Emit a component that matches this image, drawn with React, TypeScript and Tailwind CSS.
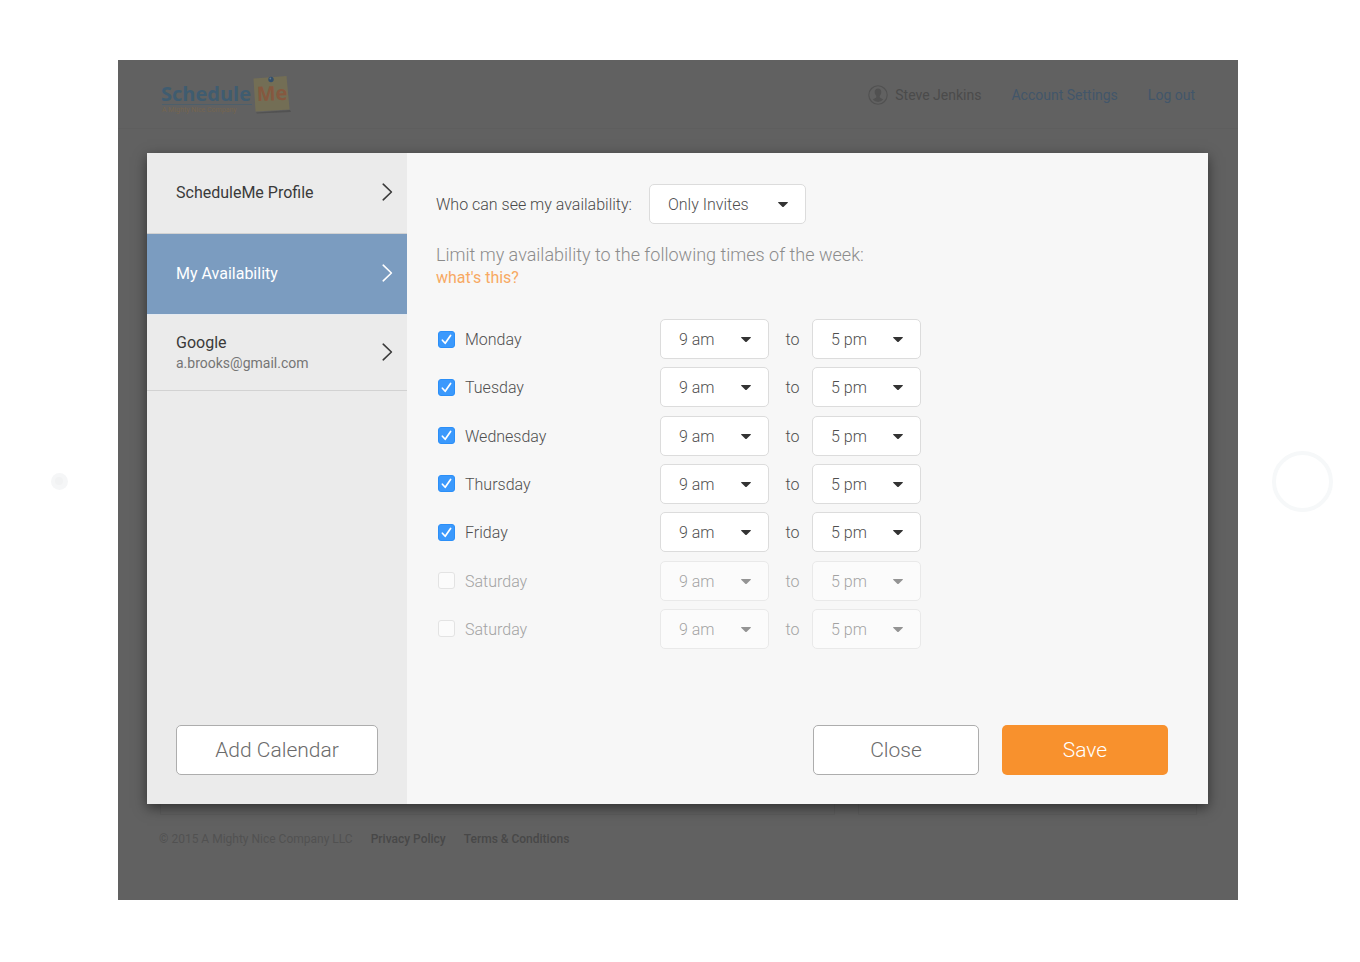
import { useId, useState } from "react";
import type { ReactNode } from "react";

function Caret() {
  return (
    <svg viewBox="0 0 10 5" className="pointer-events-none absolute top-[18px] right-[18px] h-[5px] w-[10px]" aria-hidden="true">
      <path d="M0.6 0h8.8c.5 0 .7.5.4.8L5.7 4.7a1 1 0 0 1-1.4 0L.2.8C-.1.5.1 0 .6 0Z" fill="#333333" />
    </svg>
  );
}

function Dropdown({ id, label, options, value, className, disabled }: {
  id?: string;
  label?: string;
  options: string[];
  value: string;
  className: string;
  disabled?: boolean;
}) {
  return (
    <div className={`relative h-10 ${className} ${disabled ? "opacity-50" : ""}`}>
      <select
        id={id}
        aria-label={label}
        defaultValue={value}
        disabled={disabled}
        className="h-full w-full appearance-none rounded-[5px] border border-[#dcdcdc] bg-white pt-[2px] pl-[18px] text-[16px] font-light text-[#4f4f4f] opacity-100"
      >
        {options.map((option) => (
          <option key={option}>{option}</option>
        ))}
      </select>
      <Caret />
    </div>
  );
}

const hours = ["8 am", "9 am", "10 am", "12 pm", "3 pm", "5 pm", "6 pm"];

const week = [
  { day: "Monday", on: true },
  { day: "Tuesday", on: true },
  { day: "Wednesday", on: true },
  { day: "Thursday", on: true },
  { day: "Friday", on: true },
  { day: "Saturday", on: false },
  { day: "Saturday", on: false },
];

function DayRow({ day, on }: { day: string; on: boolean }) {
  const id = useId();
  const [checked, setChecked] = useState(on);
  return (
    <div className="flex h-10 items-center">
      <div className="flex w-[222px] shrink-0 items-center gap-[10px]">
        <span className="relative flex size-[17px]">
          <input
            id={id}
            type="checkbox"
            checked={checked}
            onChange={() => setChecked(!checked)}
            className="size-full appearance-none rounded-[3px] border border-[#e3e3e3] bg-[#fbfbfb] checked:border-[#2b8ff8] checked:bg-[#3b99fc]"
          />
          {checked && (
            <svg viewBox="0 0 17 17" className="pointer-events-none absolute inset-0" aria-hidden="true">
              <path d="M4.4 9.2 7.2 12.3 12.6 4.4" fill="none" stroke="#fff" strokeWidth="1.7" strokeLinecap="round" strokeLinejoin="round" />
            </svg>
          )}
        </span>
        <label htmlFor={id} className={`pt-[2px] text-[16px] font-light ${checked ? "text-[#4f4f4f]" : "text-[#a3a3a3]"}`}>
          {day}
        </label>
      </div>
      <Dropdown label={`${day} from`} options={hours} value="9 am" className="w-[109px]" disabled={!checked} />
      <span className={`w-[43px] pt-[2px] pl-1 text-center text-[16px] font-light ${checked ? "text-[#4f4f4f]" : "text-[#a3a3a3]"}`}>to</span>
      <Dropdown label={`${day} until`} options={hours} value="5 pm" className="w-[109px]" disabled={!checked} />
    </div>
  );
}

function NavItem({ active, className, children }: { active?: boolean; className: string; children: ReactNode }) {
  return (
    <a
      href="#"
      className={`flex items-center justify-between border-b pr-[14px] pl-[29px] ${className} ${
        active ? "border-[#e4eaf1] bg-[#7b9cc0] text-white" : "border-[#d2d2d2] text-[#3a3a3a]"
      }`}
    >
      <span className="flex flex-col">{children}</span>
      <svg viewBox="0 0 11 18" className="mb-[2px] h-[18px] w-[11px]" aria-hidden="true">
        <path d="M1.2 1.2 9.4 9 1.2 16.8" fill="none" stroke="currentColor" strokeWidth="1.6" strokeLinecap="round" strokeLinejoin="round" />
      </svg>
    </a>
  );
}

function Logo() {
  return (
    <svg viewBox="0 0 132 42" className="h-[42px] w-[132px]" role="img" aria-label="ScheduleMe">
      <path d="M95 39.5 129 37l1 2-34 1.6Z" fill="#525252" />
      <path d="M92.5 5.500 125.500 3 128.600 36.600 94.500 38.600Z" fill="#736e55" />
      <text x="0" y="28" fontFamily="'Open Sans', sans-serif" fontWeight="700" fontSize="20" fill="#3f5c70">Schedule</text>
      <text x="96" y="28" fontFamily="'Open Sans', sans-serif" fontWeight="700" fontSize="20" fill="#86583f" transform="rotate(-2 96 28)">Me</text>
      <path d="M1 31.5H91" stroke="#4d5f6b" strokeWidth="1" />
      <text x="1" y="38.500" fontFamily="Roboto, sans-serif" fontSize="7" fill="#75654f">A Mighty Nice Company</text>
      <circle cx="110" cy="6.500" r="2.700" fill="#34506c" />
      <circle cx="109.300" cy="5.500" r="0.900" fill="#62788e" />
    </svg>
  );
}

function UserIcon() {
  return (
    <svg viewBox="0 0 20 20" className="size-5" aria-hidden="true">
      <circle cx="10" cy="10" r="9.200" fill="none" stroke="#515151" strokeWidth="1.100" />
      <path d="M10 3.600C12 3.600 13.300 5 13.300 7.100C13.300 8.700 12.600 10.100 11.700 10.900V12.200C11.900 13.100 14.300 13.400 15.200 14.600A7 7 0 0 1 4.800 14.600C5.700 13.400 8.100 13.100 8.300 12.200V10.900C7.400 10.100 6.700 8.700 6.700 7.100C6.700 5 8 3.600 10 3.600Z" fill="#515151" />
    </svg>
  );
}

export default function App() {
  const visibilityId = useId();
  return (
    <div className="flex min-h-screen items-stretch bg-white py-15 font-['Roboto',sans-serif]">
      <div className="flex w-[118px] shrink-0 items-center justify-center">
        <span className="flex size-[17px] items-center justify-center rounded-full bg-[#f5f6f7]">
          <span className="size-2 rounded-full bg-[#f1f2f3]" />
        </span>
      </div>

      <div className="mb-[2px] flex min-w-0 flex-1 flex-col bg-[#616161]">
        <header className="flex h-[69px] items-center justify-between border-b border-[#5e5e5e] px-[43px]">
          <Logo />
          <nav className="flex items-center gap-[30px] pt-[2px] text-[14px] text-[#42566a]">
            <span className="flex items-center gap-[7px] text-[#4b4b4b]">
              <UserIcon />
              Steve Jenkins
            </span>
            <a href="#">Account Settings</a>
            <a href="#">Log out</a>
          </nav>
        </header>

        <main className="mt-6 grid flex-1">
          <div className="col-start-1 row-start-1 mr-[41px] ml-[42px] flex gap-[23px]">
            <div className="flex-2 border border-[#5c5c5c] bg-[#616161]" />
            <div className="flex-1 border border-[#5c5c5c] bg-[#616161]" />
          </div>

          <section
            role="dialog"
            aria-label="Account settings"
            className="col-start-1 row-start-1 mr-[30px] mb-[11px] ml-[29px] flex bg-[#f7f7f7] shadow-[0_4px_12px_rgba(0,0,0,0.5)]"
          >
            <aside className="flex w-[260px] shrink-0 flex-col bg-[#ebebeb]">
              <NavItem className="h-[81px]">
                <span className="text-[16px]">ScheduleMe Profile</span>
              </NavItem>
              <NavItem active className="h-[81px]">
                <span className="text-[16px]">My Availability</span>
              </NavItem>
              <NavItem className="h-[76px]">
                <span className="text-[16px] leading-5">Google</span>
                <span className="text-[14px] leading-5 text-[#757575]">a.brooks@gmail.com</span>
              </NavItem>
              <button className="mx-[29px] mt-auto mb-[29px] h-[50px] rounded-[5px] border border-[#adadad] bg-white pt-[2px] text-[21px] font-light text-[#6b6b6b]">
                Add Calendar
              </button>
            </aside>

            <div className="flex min-w-0 flex-1 flex-col pt-[31px] pr-10 pb-[29px] pl-[29px]">
              <div className="flex items-center gap-[17px]">
                <label htmlFor={visibilityId} className="pt-[2px] text-[16px] font-light text-[#4a4a4a]">
                  Who can see my availability:
                </label>
                <Dropdown id={visibilityId} options={["Only Invites", "Everyone", "Nobody"]} value="Only Invites" className="w-[157px]" />
              </div>

              <p className="mt-[19px] text-[18px] leading-6 font-light text-[#8c8c8c]">
                Limit my availability to the following times of the week:
              </p>
              <a href="#" className="self-start text-[16px] leading-[22px] text-[#f7a963]">
                what's this?
              </a>

              <div className="mt-[30px] flex h-[330px] flex-col justify-between pl-[2px]">
                {week.map((entry, index) => (
                  <DayRow key={index} day={entry.day} on={entry.on} />
                ))}
              </div>

              <div className="mt-auto flex justify-end gap-[23px]">
                <button className="h-[50px] w-[166px] rounded-[5px] border border-[#adadad] bg-white pt-[2px] text-[21px] font-light text-[#6b6b6b]">
                  Close
                </button>
                <button className="h-[50px] w-[166px] rounded-[5px] bg-[#f8912d] pt-[2px] text-[21px] font-light text-white">Save</button>
              </div>
            </div>
          </section>
        </main>

        <footer className="flex h-[85px] items-start gap-[18px] pt-4 pl-[41px] text-[12px] leading-4 text-[#484848]">
          <span className="text-[#515151]">© 2015 A Mighty Nice Company LLC</span>
          <a href="#" className="font-medium">Privacy Policy</a>
          <a href="#" className="font-medium">Terms &amp; Conditions</a>
        </footer>
      </div>

      <div className="flex w-[122px] shrink-0 items-center justify-center pl-[6px]">
        <button aria-label="Home" className="size-[61px] rounded-full border-4 border-[#f6f8f9] bg-white" />
      </div>
    </div>
  );
}
